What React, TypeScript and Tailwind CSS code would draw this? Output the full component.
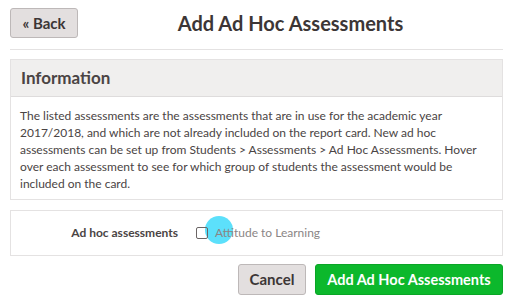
export default function App() {
  return (
    <div className="w-[516px] h-[307px] bg-white text-[#4a4444]" style={{ fontFamily: 'Lato, "Noto Sans", sans-serif' }}>
      <div className="ml-[10px] w-[493px] pt-[8px]">
        {/* Header */}
        <div className="flex items-center">
          <button className="h-[30px] w-[68px] rounded-[3px] border border-[#bdb8b8] bg-[#e3dfdf] text-[15px] font-bold text-[#3c3636]">
            « Back
          </button>
          <h1 className="flex-1 text-center text-[20px] font-bold text-[#3c3636]">Add Ad Hoc Assessments</h1>
        </div>
        <div className="mt-[11px] h-px bg-[#e4e2e2]" />

        {/* Information panel */}
        <div className="mt-[9px] border border-[#e4e2e2]">
          <div className="flex h-[37px] items-center border-b border-[#dedcdc] bg-[#f0efee] px-[10px] text-[17px] font-bold text-[#4a4444]">
            Information
          </div>
          <p className="px-[9px] pt-[10px] pb-[7px] text-[12px] leading-[17px] text-[#4a4444]">
            The listed assessments are the assessments that are in use for the academic year 2017/2018, and which are
            not already included on the report card. New ad hoc assessments can be set up from Students &gt; Assessments
            &gt; Ad Hoc Assessments. Hover over each assessment to see for which group of students the assessment would
            be included on the card.
          </p>
        </div>

        {/* Ad hoc row */}
        <div className="mt-[10px] flex h-[46px] items-center border border-[#e4e2e2]">
          <div className="w-[167px] text-right text-[12px] font-bold text-[#4a4444]">Ad hoc assessments</div>
          <label className="relative ml-[18px] flex items-center gap-[7px]">
            {/* touch indicator, behind the text */}
            <span className="absolute left-[9px] top-[-8px] h-[28px] w-[28px] rounded-full bg-[#5ce0fb]" />
            <span className="relative h-[12px] w-[12px] rounded-[2px] border-[1.5px] border-[#6b6565]" />
            <span className="relative text-[12px] text-[#8a8585]">Attitude to Learning</span>
          </label>
        </div>

        {/* Footer buttons */}
        <div className="mt-[8px] flex justify-end gap-[9px]">
          <button className="h-[31px] w-[68px] rounded-[3px] border border-[#bdb8b8] bg-[#e3dfdf] text-[15px] font-bold text-[#3c3636]">
            Cancel
          </button>
          <button className="h-[31px] w-[188px] rounded-[3px] border border-[#0aa526] bg-[#0cb82c] text-[14.5px] font-bold text-white">
            Add Ad Hoc Assessments
          </button>
        </div>
      </div>
    </div>
  );
}
